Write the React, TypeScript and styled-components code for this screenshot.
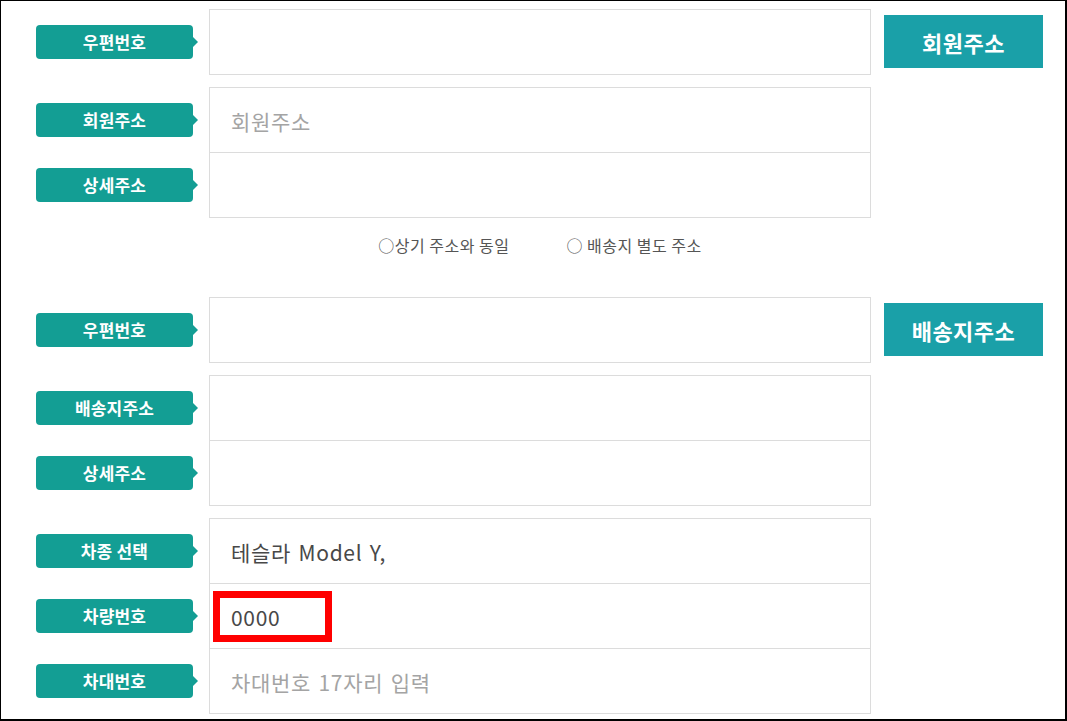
import { FC } from 'react';
import styled, { createGlobalStyle } from 'styled-components';

const GlobalStyle = createGlobalStyle`
  html, body {
    margin: 0;
    padding: 0;
    background: #fff;
  }
  body {
    font-family: 'Noto Sans CJK KR', 'Noto Sans', sans-serif;
  }
`;

const Frame = styled.div`
  box-sizing: border-box;
  width: 1067px;
  height: 721px;
  border-top: 1px solid #000;
  border-left: 1px solid #000;
  border-right: 2px solid #000;
  border-bottom: 2px solid #000;
  padding: 8px 0 0 35px;
  display: flex;
  flex-direction: column;
  gap: 12px;
  overflow: hidden;
`;

const Section = styled.div`
  display: flex;
  align-items: flex-start;
`;

const Rows = styled.div`
  display: flex;
  flex-direction: column;
`;

const Row = styled.div`
  display: flex;
  align-items: center;
  & + & {
    margin-top: -1px;
  }
`;

const Label = styled.div`
  position: relative;
  box-sizing: border-box;
  width: 157px;
  height: 34px;
  margin-right: 16px;
  border-radius: 4px;
  background: #139e94;
  color: #fff;
  font-size: 17px;
  font-weight: 700;
  letter-spacing: 0.2px;
  line-height: 34px;
  text-align: center;
  &::after {
    content: '';
    position: absolute;
    right: -5px;
    top: 50%;
    margin-top: -5px;
    border-left: 5px solid #139e94;
    border-top: 5px solid transparent;
    border-bottom: 5px solid transparent;
  }
`;

const Cell = styled.div<{ $muted?: boolean }>`
  position: relative;
  box-sizing: border-box;
  width: 662px;
  height: 66px;
  border: 1px solid #dcdcdc;
  padding: 2px 0 0 21px;
  display: flex;
  align-items: center;
  font-size: 21px;
  letter-spacing: 0.7px;
  word-spacing: 2px;
  color: ${(p) => (p.$muted ? '#a4a4a4' : '#484848')};
`;

const Highlight = styled.div`
  position: absolute;
  left: 3px;
  top: 7px;
  width: 119px;
  height: 51px;
  box-sizing: border-box;
  border: 7px solid #ff0000;
`;

const SideButton = styled.button`
  box-sizing: border-box;
  width: 159px;
  height: 53px;
  margin: 6px 0 0 13px;
  border: none;
  background: #1aa0a8;
  color: #fff;
  font-family: inherit;
  font-size: 22px;
  font-weight: 700;
  letter-spacing: 0.5px;
  padding: 0;
`;

const RadioRow = styled.div`
  display: flex;
  justify-content: center;
  gap: 57px;
  width: 662px;
  margin-left: 173px;
  padding: 5px 0 30px;
  font-size: 16px;
  line-height: 20px;
  color: #555;
  letter-spacing: 0.5px;
`;

type Field = { label: string; value?: string; placeholder?: string; marked?: boolean };

const FieldGroup: FC<{ fields: Field[]; button?: string }> = ({ fields, button }) => (
  <Section>
    <Rows>
      {fields.map((f) => (
        <Row key={f.label}>
          <Label>{f.label}</Label>
          <Cell $muted={!f.value}>
            {f.value ?? f.placeholder}
            {f.marked && <Highlight />}
          </Cell>
        </Row>
      ))}
    </Rows>
    {button && <SideButton>{button}</SideButton>}
  </Section>
);

export default function App() {
  return (
    <>
      <GlobalStyle />
      <Frame>
        <FieldGroup fields={[{ label: '우편번호' }]} button="회원주소" />
        <FieldGroup fields={[{ label: '회원주소', placeholder: '회원주소' }, { label: '상세주소' }]} />
        <RadioRow>
          <span>○상기 주소와 동일</span>
          <span>○ 배송지 별도 주소</span>
        </RadioRow>
        <FieldGroup fields={[{ label: '우편번호' }]} button="배송지주소" />
        <FieldGroup fields={[{ label: '배송지주소' }, { label: '상세주소' }]} />
        <FieldGroup
          fields={[
            { label: '차종 선택', value: '테슬라 Model Y,' },
            { label: '차량번호', value: '0000', marked: true },
            { label: '차대번호', placeholder: '차대번호 17자리 입력' },
          ]}
        />
      </Frame>
    </>
  );
}
